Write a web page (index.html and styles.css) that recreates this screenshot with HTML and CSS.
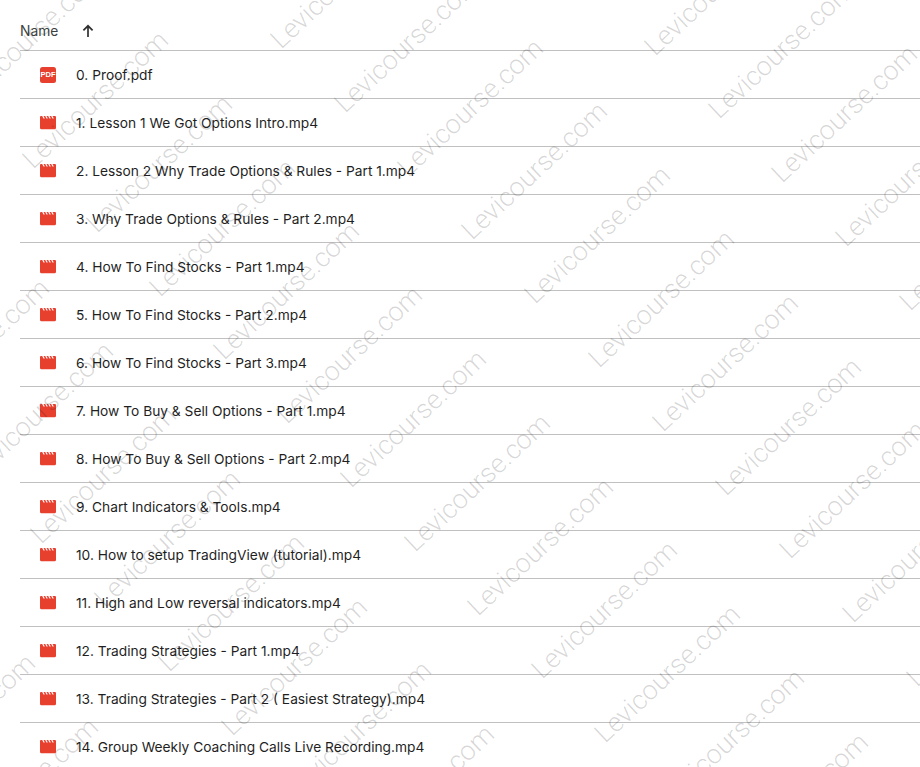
FILE: index.html
```html
<!DOCTYPE html>
<html lang="en">
<head>
<meta charset="utf-8">
<title>Files</title>
<link rel="stylesheet" href="styles.css">
</head>
<body>
<svg width="0" height="0" class="defs">
  <defs>
    <g id="clap"><path d="M1.2 1h1l1.3 2.4h1.3L3.5 1h1.7l1.3 2.4h1.3L6.5 1h1.7l1.3 2.4h1.3L9.5 1h1.7l1.3 2.4h1.3L12.5 1h2.3c.7 0 1.2.5 1.2 1.2V13c0 .7-.5 1.2-1.2 1.2H1.2C.5 14.2 0 13.7 0 13V2.2C0 1.5.5 1 1.2 1z"/></g>
    <text id="wm" class="wm-text" transform="rotate(-43)">Levicourse.com</text>
  </defs>
</svg>
<main class="list">
  <header class="head"><span class="head-name">Name</span>
    <svg class="arrow" viewBox="0 0 16 16" width="16" height="16"><path d="M8 14V3.2M3.4 7.4L8 2.8l4.6 4.6" /></svg>
  </header>
  <div class="row"><span class="icon pdf">PDF</span><span class="name">0. Proof.pdf</span></div>
  <div class="row"><svg class="icon" viewBox="0 0 16 16"><use href="#clap"/></svg><span class="name">1. Lesson 1 We Got Options Intro.mp4</span></div>
  <div class="row"><svg class="icon" viewBox="0 0 16 16"><use href="#clap"/></svg><span class="name">2. Lesson 2 Why Trade Options &amp; Rules - Part 1.mp4</span></div>
  <div class="row"><svg class="icon" viewBox="0 0 16 16"><use href="#clap"/></svg><span class="name">3. Why Trade Options &amp; Rules - Part 2.mp4</span></div>
  <div class="row"><svg class="icon" viewBox="0 0 16 16"><use href="#clap"/></svg><span class="name">4. How To Find Stocks - Part 1.mp4</span></div>
  <div class="row"><svg class="icon" viewBox="0 0 16 16"><use href="#clap"/></svg><span class="name">5. How To Find Stocks - Part 2.mp4</span></div>
  <div class="row"><svg class="icon" viewBox="0 0 16 16"><use href="#clap"/></svg><span class="name">6. How To Find Stocks - Part 3.mp4</span></div>
  <div class="row"><svg class="icon" viewBox="0 0 16 16"><use href="#clap"/></svg><span class="name">7. How To Buy &amp; Sell Options - Part 1.mp4</span></div>
  <div class="row"><svg class="icon" viewBox="0 0 16 16"><use href="#clap"/></svg><span class="name">8. How To Buy &amp; Sell Options - Part 2.mp4</span></div>
  <div class="row"><svg class="icon" viewBox="0 0 16 16"><use href="#clap"/></svg><span class="name">9. Chart Indicators &amp; Tools.mp4</span></div>
  <div class="row"><svg class="icon" viewBox="0 0 16 16"><use href="#clap"/></svg><span class="name">10. How to setup TradingView (tutorial).mp4</span></div>
  <div class="row"><svg class="icon" viewBox="0 0 16 16"><use href="#clap"/></svg><span class="name">11. High and Low reversal indicators.mp4</span></div>
  <div class="row"><svg class="icon" viewBox="0 0 16 16"><use href="#clap"/></svg><span class="name">12. Trading Strategies - Part 1.mp4</span></div>
  <div class="row"><svg class="icon" viewBox="0 0 16 16"><use href="#clap"/></svg><span class="name">13. Trading Strategies - Part 2 ( Easiest Strategy).mp4</span></div>
  <div class="row"><svg class="icon" viewBox="0 0 16 16"><use href="#clap"/></svg><span class="name">14. Group Weekly Coaching Calls Live Recording.mp4</span></div>
</main>
<svg class="watermark" width="920" height="767" viewBox="0 0 920 767" aria-hidden="true">
  <use href="#wm" x="655" y="57"/><use href="#wm" x="719" y="120"/><use href="#wm" x="782" y="184"/><use href="#wm" x="846" y="248"/><use href="#wm" x="910" y="312"/>
  <use href="#wm" x="281" y="50"/><use href="#wm" x="345" y="114"/><use href="#wm" x="408" y="178"/><use href="#wm" x="472" y="241"/><use href="#wm" x="535" y="305"/><use href="#wm" x="599" y="369"/><use href="#wm" x="663" y="433"/><use href="#wm" x="726" y="497"/><use href="#wm" x="790" y="560"/><use href="#wm" x="853" y="624"/><use href="#wm" x="917" y="688"/>
  <use href="#wm" x="-94" y="42"/><use href="#wm" x="-31" y="106"/><use href="#wm" x="33" y="170"/><use href="#wm" x="97" y="234"/><use href="#wm" x="160" y="298"/><use href="#wm" x="224" y="361"/><use href="#wm" x="287" y="425"/><use href="#wm" x="351" y="489"/><use href="#wm" x="415" y="553"/><use href="#wm" x="478" y="617"/><use href="#wm" x="542" y="680"/><use href="#wm" x="605" y="744"/><use href="#wm" x="669" y="808"/><use href="#wm" x="733" y="872"/>
  <use href="#wm" x="-86" y="418"/><use href="#wm" x="-22" y="481"/><use href="#wm" x="41" y="545"/><use href="#wm" x="105" y="609"/><use href="#wm" x="169" y="673"/><use href="#wm" x="232" y="737"/><use href="#wm" x="296" y="800"/><use href="#wm" x="359" y="864"/>
  <use href="#wm" x="-100" y="793"/><use href="#wm" x="-37" y="857"/>
</svg>
</body>
</html>
```
FILE: styles.css
```css
html, body { margin: 0; padding: 0; background: #fff; }
body { width: 920px; height: 767px; overflow: hidden; position: relative; font-family: Inter, Roboto, sans-serif; color: #1f1f1f; }
.defs { position: absolute; }
.list { padding-left: 20px; }
.head { display: flex; align-items: center; padding-top: 11px; box-sizing: border-box; border-bottom: 1px solid #c0c0c0; height: 51px; }
.head-name { font-size: 13.8px; font-weight: 400; color: #3c3f3e; width: 60px; }
.arrow { fill: none; stroke: #303030; stroke-width: 1.7; }
.row { height: 48px; box-sizing: border-box; border-bottom: 1px solid #c0c0c0; display: flex; align-items: center; padding-left: 20px; }
.icon { width: 16px; height: 16px; fill: #e8402f; flex: none; margin-right: 20px; }
.pdf { background: #e8402f; border-radius: 2.5px; color: #fff; font: 700 7.5px/16px "Liberation Sans", sans-serif; text-align: center; }
.name { font-size: 13.75px; white-space: nowrap; }
.watermark { position: absolute; left: 0; top: 0; pointer-events: none; }
.wm-text { font-family: Roboto, sans-serif; font-weight: 300; font-size: 27px; fill: rgba(0,0,0,.16); }
```
